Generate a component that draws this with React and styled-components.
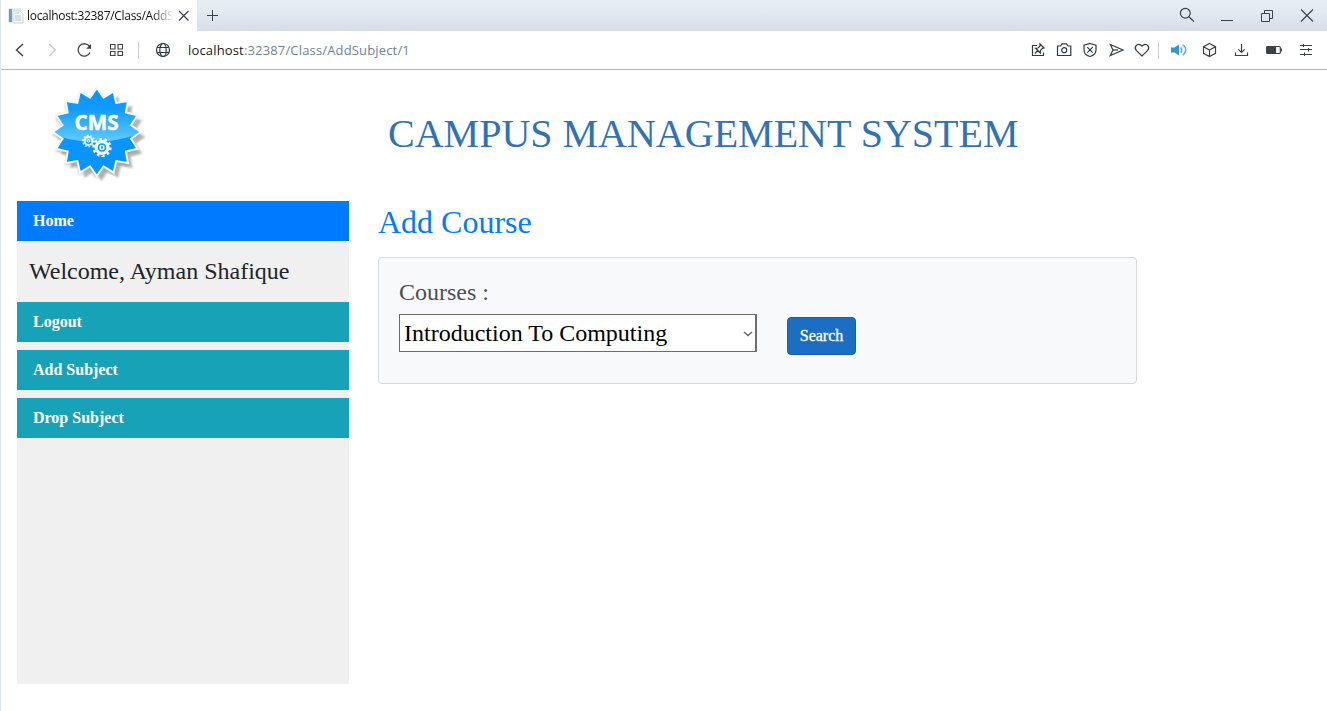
import React from "react";
import styled, { createGlobalStyle } from "styled-components";

const GlobalStyle = createGlobalStyle`
  * { box-sizing: border-box; }
  body { margin: 0; background: #fff; overflow: hidden; }
`;

const Browser = styled.div`
  display: flex;
  flex-direction: column;
  width: 100%;
  height: 711px;
  border-left: 1px solid #dfe7f4;
  font-family: "Liberation Serif", "Times New Roman", serif;
  color: #212529;
`;

const TabBar = styled.div`
  display: flex;
  height: 31px;
  flex: none;
  background: linear-gradient(#e6edf5, #e2eaf2 35%, #d6dfe8);
`;

const Tab = styled.div`
  display: flex;
  align-items: center;
  width: 196px;
  padding: 0 5px 0 7px;
  background: #fff;
`;

const TabTitle = styled.span`
  width: 146px;
  margin: 0 3px 0 3px;
  white-space: nowrap;
  font: 12px/18px "Open Sans", "Noto Sans", sans-serif;
  letter-spacing: -0.3px;
  color: #111;
  mask-image: linear-gradient(90deg, #000 124px, transparent 147px);
`;

const NewTab = styled.div`
  display: flex;
  align-items: center;
  margin-left: 8px;
`;

const WindowButtons = styled.div`
  display: flex;
  align-items: center;
  gap: 24px;
  margin-left: auto;
  padding-right: 12px;
`;

const AddressBar = styled.div`
  display: flex;
  align-items: center;
  height: 39px;
  flex: none;
  padding: 0 13px 0 11px;
  background: #fff;
  border-bottom: 1px solid #aebac6;
`;

const IconGroup = styled.div`
  display: flex;
  align-items: center;
  gap: ${(p) => p.$gap}px;
  margin-left: ${(p) => p.$left || "0"};
`;

const Divider = styled.div`
  width: 1px;
  height: 17px;
  background: #ccc;
  margin: 0 ${(p) => p.$after}px 0 ${(p) => p.$before}px;
`;

const Url = styled.div`
  margin-left: 17px;
  font: 13px/18px "Open Sans", "Noto Sans", sans-serif;
  letter-spacing: 0.16px;
  color: #718394;
  white-space: nowrap;
`;

const Host = styled.span`
  color: #16191c;
`;

const Icon = styled.svg`
  display: block;
  flex: none;
  width: 16px;
  height: 16px;
  overflow: visible;
  fill: none;
  stroke: ${(p) => p.$color || "#3c4248"};
  stroke-width: ${(p) => p.$weight || 1.2};
`;

const Header = styled.header`
  display: flex;
  height: 131px;
  flex: none;
  padding-left: 46px;
`;

const Logo = styled.svg`
  width: 110px;
  height: 110px;
  margin-top: 12px;
  overflow: visible;
`;

const LogoText = styled.text`
  font: bold 21px "Open Sans", sans-serif;
  fill: #fff;
  stroke: #fff;
  stroke-width: 0.5px;
`;

const Title = styled.h1`
  margin: 40px 0 0 231px;
  font-size: 40px;
  font-weight: 400;
  line-height: 48px;
  color: #2f73b6;
  white-space: nowrap;
`;

const Body = styled.div`
  display: flex;
  padding-left: 16px;
`;

const Sidebar = styled.nav`
  width: 332px;
  height: 483px;
  background: #f0f0f0;
`;

const NavItem = styled.a`
  display: block;
  height: 40px;
  margin-bottom: 8px;
  padding-left: 16px;
  font-size: 16px;
  font-weight: 700;
  line-height: 40px;
  color: #fff;
  background: ${(p) => (p.$active ? "#007bff" : "#18a2b8")};
`;

const Welcome = styled.div`
  height: 53px;
  padding: 8px 0 0 12px;
  font-size: 24px;
  line-height: 29px;
`;

const Main = styled.main`
  width: 759px;
  margin-left: 29px;
`;

const Heading = styled.h2`
  margin: 2px 0 16px;
  font-size: 32px;
  font-weight: 400;
  line-height: 38px;
  color: #007bff;
`;

const Card = styled.section`
  display: flex;
  height: 127px;
  padding: 20px;
  border: 1px solid #d8dadd;
  border-radius: 4px;
  background: #f8f9fb;
`;

const Field = styled.div`
  width: 358px;
`;

const Label = styled.div`
  height: 36px;
  font-size: 24px;
  line-height: 28px;
  color: #495057;
`;

const SelectBox = styled.div`
  display: flex;
  align-items: center;
  justify-content: space-between;
  height: 38px;
  padding: 0 2px 0 4px;
  border: 1px solid #6d6d6d;
  border-right-width: 2px;
  background: #fff;
  font-size: 24px;
  line-height: 36px;
  color: #000;
`;

const Chevron = styled.svg`
  width: 10px;
  height: 8px;
  margin-top: 1px;
  fill: none;
  stroke: #666;
  stroke-width: 1.4;
`;

const SearchButton = styled.button`
  width: 69px;
  height: 38px;
  margin: 39px 0 0 30px;
  padding: 0;
  border: 1px solid #1861ac;
  border-radius: 4px;
  background: #1b6ec2;
  color: #fff;
  font: 16px/36px "Liberation Serif", serif;
  -webkit-text-stroke: 0.3px #fff;
`;

const burst = (cx, cy, outer, inner, count) =>
  Array.from({ length: count * 2 }, (_, i) => {
    const a = (i * Math.PI) / count - Math.PI / 2;
    const r = i % 2 ? inner : outer;
    return `${(cx + r * Math.cos(a)).toFixed(1)},${(cy + r * Math.sin(a)).toFixed(1)}`;
  }).join(" ");

const STAR = burst(49.8, 50, 44, 35, 16);

const Gear = ({ x, y, r, opacity }) => (
  <g fill="none" stroke="#fff" opacity={opacity}>
    <circle cx={x} cy={y} r={r * 0.62} strokeWidth={r * 0.34} />
    <circle cx={x} cy={y} r={r * 0.2} strokeWidth={r * 0.16} />
    <circle
      cx={x} cy={y} r={r * 0.87} strokeWidth={r * 0.26}
      pathLength="20" strokeDasharray="1 1"
    />
  </g>
);

const CmsLogo = () => (
  <Logo viewBox="0 0 110 110">
    <defs>
      <linearGradient id="gloss" gradientUnits="userSpaceOnUse" x1="0" y1="6" x2="0" y2="60">
        <stop offset="0" stopColor="#0693ff" />
        <stop offset="0.4" stopColor="#129cff" />
        <stop offset="1" stopColor="#62ccff" />
      </linearGradient>
      <clipPath id="upper">
        <path d="M0 50Q50 72 110 45V0H0Z" />
      </clipPath>
      <filter id="soft" x="-20%" y="-20%" width="140%" height="140%">
        <feGaussianBlur stdDeviation="1" />
      </filter>
    </defs>
    <polygon points={STAR} transform="translate(4.5 5)" fill="#666" opacity="0.5" filter="url(#soft)" />
    <polygon points={STAR} transform="translate(-1 2.5)" fill="#888" opacity="0.45" filter="url(#soft)" />
    <polygon points={STAR} fill="#0796ff" />
    <polygon points={STAR} fill="url(#gloss)" clipPath="url(#upper)" />
    <polygon points={STAR} fill="none" stroke="#f5f9fd" strokeWidth="2" />
    <LogoText x="27.5" y="48.3" textLength="44" lengthAdjust="spacingAndGlyphs">CMS</LogoText>
    <Gear x={41.5} y={59} r={6.4} opacity={0.85} />
    <Gear x={55} y={65.5} r={9.6} opacity={0.95} />
  </Logo>
);

export default function App() {
  return (
    <>
      <GlobalStyle />
      <Browser>
        <TabBar>
          <Tab>
            <Icon viewBox="0 0 16 16" $color="none">
              <path d="M1 1H12V14H1Z" fill="#edf1f4" stroke="#d1d9e0" />
              <path d="M1 1H4V14H1Z" fill="#55a5dc" />
              <path d="M5 3H12L15 6V15H5Z" fill="#f5f7f9" stroke="#ccd4db" strokeWidth="1" />
              <path d="M7 5H11M7 8H13M7 10H13M7 12H13" stroke="#bbc7d1" strokeWidth="1" />
            </Icon>
            <TabTitle>localhost:32387/Class/AddS</TabTitle>
            <Icon viewBox="0 0 16 16"><path d="M3 3L12.5 12.5M12.5 3L3 12.5" /></Icon>
          </Tab>
          <NewTab>
            <Icon viewBox="0 0 16 16" $weight={1}><path d="M7.5 2V13M2 7.5H13" /></Icon>
          </NewTab>
          <WindowButtons>
            <Icon viewBox="0 0 16 16"><circle cx="6.3" cy="5.2" r="4.9" /><path d="M9.8 8.7L15 13.5" /></Icon>
            <Icon viewBox="0 0 16 16" $weight={1}><path d="M2 12.5H14" /></Icon>
            <Icon viewBox="0 0 16 16" $weight={1}><path d="M2.5 5.5H10.5V13.5H2.5ZM5.5 5.5V2.5H13.5V10.5H10.5" /></Icon>
            <Icon viewBox="0 0 16 16" $weight={1.1}><path d="M2 1.5L14 13.5M14 1.5L2 13.5" /></Icon>
          </WindowButtons>
        </TabBar>

        <AddressBar>
          <IconGroup $gap={16}>
            <Icon viewBox="0 0 16 16" $weight={1.4}><path d="M11 2L4.5 8L11 14" /></Icon>
            <Icon viewBox="0 0 16 16" $color="#c3c6c9"><path d="M5 2L11.5 8L5 14" /></Icon>
            <Icon viewBox="0 0 16 16" $weight={1.3}>
              <path d="M14 10.5A6.2 6.2 0 1 1 13.7 4.8" />
              <path d="M15 2V6.7H10.2L15 2Z" fill="#3c4248" stroke="none" />
            </Icon>
            <Icon viewBox="0 0 16 16" $weight={1.1}>
              <path d="M2.5 2.5H7V7H2.5ZM10 2.5H14.5V7H10ZM2.5 9.5H7V13.5H2.5ZM10 9.5H14.5V13.5H10Z" />
            </Icon>
          </IconGroup>
          <Divider $before={14} $after={16} />
          <Icon viewBox="0 0 16 16" $weight={1.2} $color="#2b3946">
            <circle cx="8" cy="8" r="6.5" />
            <ellipse cx="8" cy="8" rx="3.2" ry="6.5" />
            <path d="M2.3 5.5H13.7M2.3 10.5H13.7" />
          </Icon>
          <Url><Host>localhost</Host>:32387/Class/AddSubject/1</Url>

          <IconGroup $gap={10} $left="auto">
            <Icon viewBox="0 0 16 16" $color="#303b46">
              <path d="M7 3.5H2.5V13.5H13.5V10.5M5 11.5L8 8M10 2L14 6L12.3 6.4L10.4 8.4L10.3 11L5.5 6.2L8.1 6L10 4Z" />
            </Icon>
            <Icon viewBox="0 0 16 16" $color="#303b46">
              <path d="M1.5 4H4.5L6 1.8H10.5L12 4H14.8V13.5H1.5Z" /><circle cx="8.2" cy="8.2" r="2.5" />
            </Icon>
            <Icon viewBox="0 0 16 16" $color="#303b46">
              <path d="M8 1.5L14 3.3V8Q14 12.8 8 14.5Q2 12.8 2 8V3.3ZM5.3 5.2L10.7 10.7M10.7 5.2L5.3 10.7" />
            </Icon>
            <Icon viewBox="0 0 16 16" $color="#303b46">
              <path d="M2.3 2.5L15 8L2.3 13.5L5 8Z" /><path d="M5 8H10" />
            </Icon>
            <Icon viewBox="0 0 16 16" $color="#303b46">
              <path d="M8 14L2.5 8.7C-0.5 5.5 3 0.5 7 3.2L8 4.2L9 3.2C13 0.5 16.5 5.5 13.5 8.7Z" />
            </Icon>
          </IconGroup>
          <Divider $before={8} $after={11} />
          <IconGroup $gap={16}>
            <Icon viewBox="0 0 16 16" $color="#4aaee4">
              <path d="M1 5.5H4.5L9 2.5V13.5L4.5 10.5H1Z" fill="#3494d5" stroke="none" />
              <path d="M10.8 5.3Q12.5 8 10.8 10.7M13 2.8Q18.5 8 13 13.2" strokeWidth="1.5" />
            </Icon>
            <Icon viewBox="0 0 16 16"><path d="M7.5 1.5L13.5 4.7V11.3L7.5 14.5L1.5 11.3V4.7ZM1.5 4.7L7.5 8L13.5 4.7M7.5 8V14.5" /></Icon>
            <Icon viewBox="0 0 16 16"><path d="M7.5 2V10.5M4.3 7.3L7.5 10.5L10.7 7.3M1.5 10.5V13.5H13.5V10.5" /></Icon>
            <Icon viewBox="0 0 16 16">
              <rect x="0.7" y="4.5" width="13.6" height="7" rx="1" />
              <path d="M1 5H9.5V11H1Z" fill="#3c4248" /><path d="M15.4 6.5V9.5" />
            </Icon>
            <Icon viewBox="0 0 16 16" $weight={1}>
              <path d="M2 3.5H14M2 7.5H14M2 12.5H14M5.5 2V5M10.5 6V9.5M6.5 10.5V14" />
            </Icon>
          </IconGroup>
        </AddressBar>

        <Header>
          <CmsLogo />
          <Title>CAMPUS MANAGEMENT SYSTEM</Title>
        </Header>

        <Body>
          <Sidebar>
            <NavItem $active>Home</NavItem>
            <Welcome>Welcome, Ayman Shafique</Welcome>
            <NavItem>Logout</NavItem>
            <NavItem>Add Subject</NavItem>
            <NavItem>Drop Subject</NavItem>
          </Sidebar>
          <Main>
            <Heading>Add Course</Heading>
            <Card>
              <Field>
                <Label>Courses :</Label>
                <SelectBox>
                  Introduction To Computing
                  <Chevron viewBox="0 0 10 8"><path d="M1 2L5 5.5L9 2" /></Chevron>
                </SelectBox>
              </Field>
              <SearchButton>Search</SearchButton>
            </Card>
          </Main>
        </Body>
      </Browser>
    </>
  );
}
